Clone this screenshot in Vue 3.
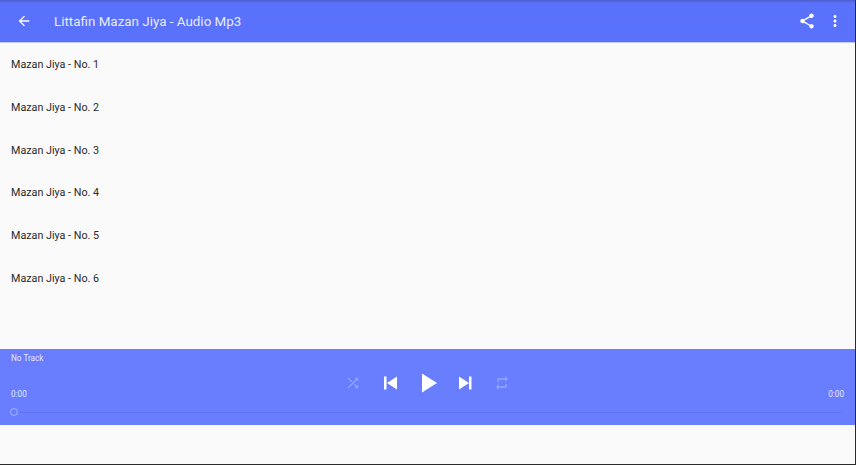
<script setup>
const tracks = [1, 2, 3, 4, 5, 6].map((n) => `Mazan Jiya - No. ${n}`)
</script>

<template>
  <div class="screen">
    <header class="toolbar">
      <svg class="back" width="16" height="16" viewBox="0 0 24 24">
        <path fill="#fff" d="M20 11H7.83l5.59-5.59L12 4l-8 8 8 8 1.41-1.41L7.83 13H20v-2z" />
      </svg>
      <h1 class="title">Littafin Mazan Jiya - Audio Mp3</h1>
      <svg class="share" width="18" height="18" viewBox="0 0 24 24">
        <path fill="#fff" d="M18 16.08c-.76 0-1.44.3-1.96.77L8.91 12.7c.05-.23.09-.46.09-.7s-.04-.47-.09-.7l7.05-4.11c.54.5 1.25.81 2.04.81 1.66 0 3-1.34 3-3s-1.34-3-3-3-3 1.34-3 3c0 .24.04.47.09.7L8.04 9.81C7.5 9.31 6.79 9 6 9c-1.66 0-3 1.34-3 3s1.34 3 3 3c.79 0 1.5-.31 2.04-.81l7.12 4.16c-.05.21-.08.43-.08.65 0 1.61 1.31 2.92 2.92 2.92s2.92-1.31 2.92-2.92-1.31-2.92-2.92-2.92z" />
      </svg>
      <svg class="more" width="18" height="18" viewBox="0 0 24 24">
        <path fill="#fff" d="M12 8c1.1 0 2-.9 2-2s-.9-2-2-2-2 .9-2 2 .9 2 2 2zm0 2c-1.1 0-2 .9-2 2s.9 2 2 2 2-.9 2-2-.9-2-2-2zm0 6c-1.1 0-2 .9-2 2s.9 2 2 2 2-.9 2-2-.9-2-2-2z" />
      </svg>
    </header>

    <ul class="list">
      <li v-for="t in tracks" :key="t">{{ t }}</li>
    </ul>

    <section class="player">
      <div class="track">No Track</div>
      <div class="controls">
        <span class="time">0:00</span>
        <div class="buttons">
          <svg class="dim" width="24" height="24" viewBox="-4.500 -6 36 36">
            <path fill="#fff" d="M10.59 9.17L5.41 4 4 5.41l5.17 5.17 1.42-1.41zM14.5 4l2.04 2.04L4 18.59 5.41 20 17.96 7.46 20 9.5V4h-5.5zm.33 9.41l-1.41 1.41 3.13 3.13L14.5 20H20v-5.5l-2.04 2.04-3.13-3.13z" />
          </svg>
          <svg width="24" height="24" viewBox="0 0 24 24">
            <path fill="#fff" d="M5 5.500h2.500v13H5zM8 12l10-6.500v13z" />
          </svg>
          <svg width="24" height="24" viewBox="0 0 24 24">
            <path fill="#fff" d="M6 2.500L21 12 6 21.500z" />
          </svg>
          <svg width="24" height="24" viewBox="0 0 24 24">
            <path fill="#fff" d="M16 5.500h2.500v13H16zM6 5.500L16 12 6 18.500z" />
          </svg>
          <svg class="dim" width="24" height="24" viewBox="-6 -6 36 36">
            <path fill="#fff" d="M7 7h10v3l4-4-4-4v3H5v6h2V7zm10 10H7v-3l-4 4 4 4v-3h12v-6h-2v4z" />
          </svg>
        </div>
        <span class="time">0:00</span>
      </div>
      <div class="seek">
        <span class="thumb"></span>
        <span class="rail"></span>
      </div>
    </section>
  </div>
</template>

<style>
html,
body {
  margin: 0;
  background: #fafafa;
}
</style>

<style scoped>
.screen {
  width: 856px;
  height: 465px;
  box-sizing: border-box;
  display: flex;
  flex-direction: column;
  background: #fafafa;
  border-right: 1px solid #2b2b2b;
  border-bottom: 1px solid #2b2b2b;
  font-family: Roboto, "Liberation Sans", sans-serif;
  overflow: hidden;
}

.toolbar {
  height: 43px;
  flex: none;
  display: flex;
  align-items: center;
  box-sizing: border-box;
  padding: 0 11px 0 16px;
  background: linear-gradient(#4c5cc8, #5a71fc 3px);
  border-bottom: 1px solid #c4ccff;
}

.back {
  margin-right: 22px;
}

.title {
  flex: 1;
  margin: 0;
  font-size: 13.4px;
  font-weight: 400;
  color: rgba(255, 255, 255, 0.88);
}

.more {
  margin-left: 10px;
}

.list {
  flex: 1;
  margin: 0;
  padding: 1px 0 0;
  list-style: none;
}

.list li {
  height: 42.8px;
  line-height: 42.8px;
  padding-left: 11px;
  font-size: 10.75px;
  color: #2a2a2a;
}

.player {
  flex: none;
  height: 76px;
  margin-bottom: 39px;
  box-sizing: border-box;
  padding: 4px 11px 0 11px;
  background: #687eff;
  color: rgba(255, 255, 255, 0.85);
  font-size: 8.2px;
}

.track {
  line-height: 11px;
}

.controls {
  display: flex;
  align-items: center;
  justify-content: space-between;
  height: 36px;
  margin-top: 1px;
}

.time {
  align-self: flex-end;
  line-height: 11px;
  margin-bottom: 1px;
}

.buttons {
  display: flex;
  align-items: center;
  gap: 13px;
}

.dim {
  opacity: 0.3;
}

.seek {
  display: flex;
  align-items: center;
  margin-top: 7px;
  margin-left: -1px;
  margin-right: 3px;
}

.thumb {
  width: 6px;
  height: 6px;
  flex: none;
  border: 1px solid rgba(255, 255, 255, 0.4);
  border-radius: 50%;
}

.rail {
  flex: 1;
  height: 1px;
  background: rgba(60, 70, 160, 0.18);
}
</style>
